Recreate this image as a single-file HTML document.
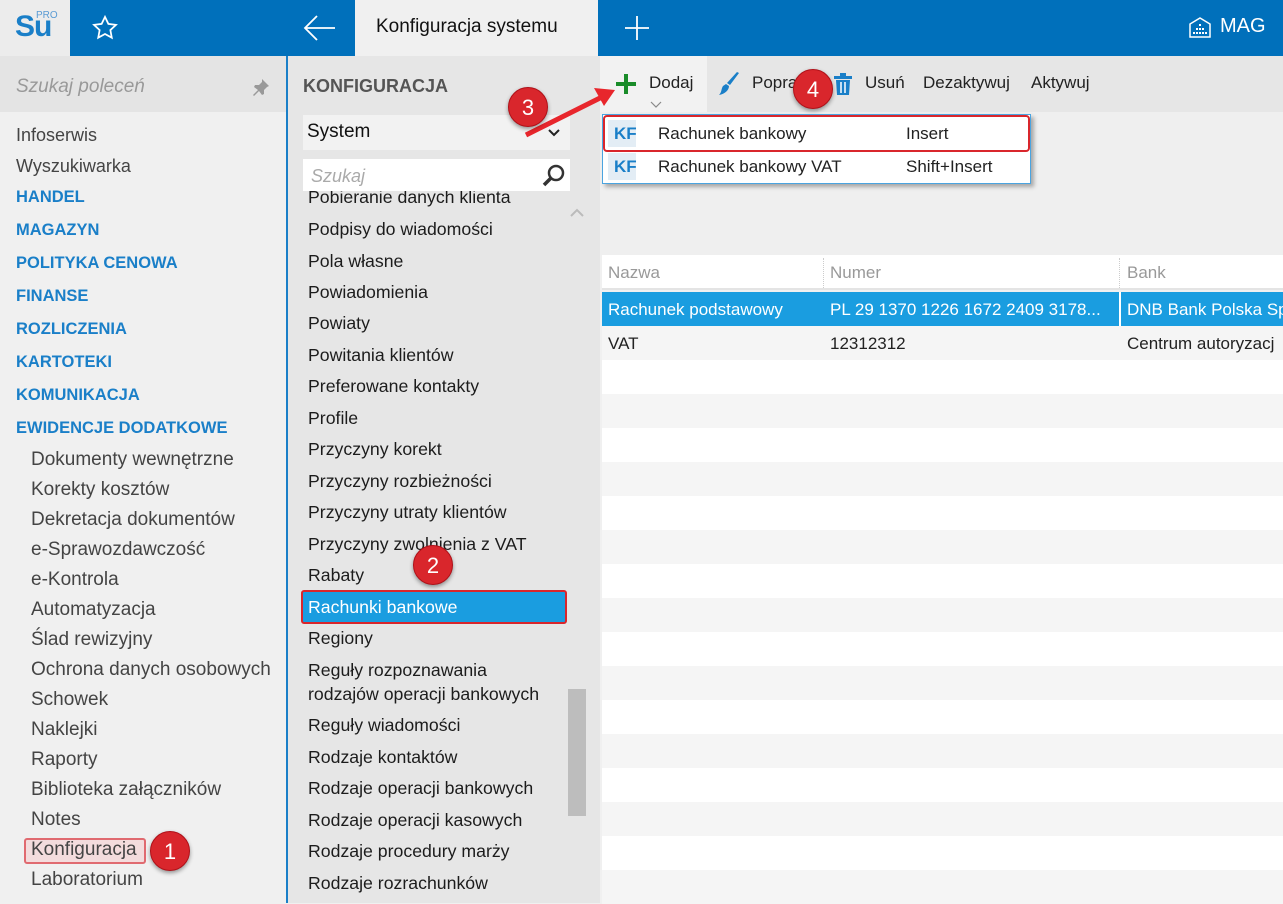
<!DOCTYPE html>
<html><head><meta charset="utf-8"><style>
*{margin:0;padding:0;box-sizing:border-box}
body{width:1283px;height:903px;overflow:hidden;position:relative;font-family:"Liberation Sans",sans-serif;font-size:17px;color:#222;background:#f0f0f0}
.a{position:absolute;white-space:nowrap}
.top{position:absolute;left:70px;top:0;width:1213px;height:56px;background:#0070bb}
.s{color:#444;font-size:19px}
.s1{color:#444;font-size:18px}
.b{color:#1a7fc8;font-weight:bold;font-size:16.5px}
.m{color:#1c1c1c;font-size:17.7px}
.badge{position:absolute;width:40px;height:40px;border-radius:50%;background:#d9262c;color:#fff;font-size:22px;text-align:center;line-height:40px;box-shadow:0 2px 4px rgba(0,0,0,.4);border:1px solid #b01018}
.row{position:absolute;left:602px;width:681px;height:34px}
</style></head><body>
<div class="a" style="left:0;top:0;width:70px;height:56px;background:#ececec"></div>
<div class="a" style="left:15px;top:10px;font-size:30px;font-weight:bold;color:#1a7fc8;letter-spacing:-1px">Su</div>
<div class="a" style="left:36px;top:10px;font-size:10px;color:#5a9bd4">PRO</div>
<div class="top"></div>
<svg class="a" style="left:91px;top:14px" width="28" height="28" viewBox="0 0 24 24"><path d="M12 2.5l2.9 6 6.5.8-4.8 4.5 1.2 6.5L12 17.1l-5.8 3.2 1.2-6.5L2.6 9.3l6.5-.8z" fill="none" stroke="#fff" stroke-width="1.5"/></svg>
<svg class="a" style="left:303px;top:14px" width="34" height="28" viewBox="0 0 34 28"><path d="M2 14h30M14 2L2 14l12 12" fill="none" stroke="#fff" stroke-width="1.8"/></svg>
<div class="a" style="left:355px;top:0;width:243px;height:56px;background:#f0f0f0"></div>
<div class="a" style="left:376px;top:16px;font-size:19px;color:#111">Konfiguracja systemu</div>
<svg class="a" style="left:623px;top:14px" width="28" height="28"><path d="M14 2v24M2 14h24" stroke="#fff" stroke-width="1.8"/></svg>
<svg class="a" style="left:1188px;top:16px" width="24" height="22" viewBox="0 0 24 22"><path d="M2 21V8l10-6 10 6v13z" fill="none" stroke="#fff" stroke-width="1.5"/><g fill="#fff"><rect x="11" y="8" width="2" height="2"/><rect x="8" y="12" width="2" height="2"/><rect x="11" y="12" width="2" height="2"/><rect x="14" y="12" width="2" height="2"/><rect x="5" y="16" width="2" height="2"/><rect x="8" y="16" width="2" height="2"/><rect x="11" y="16" width="2" height="2"/><rect x="14" y="16" width="2" height="2"/><rect x="17" y="16" width="2" height="2"/></g></svg>
<div class="a" style="left:1220px;top:15px;font-size:20px;color:#fff">MAG</div>

<div class="a" style="left:0;top:56px;width:286px;height:56px;background:#e4e4e4"></div>
<div class="a" style="left:16px;top:76px;font-size:19px;font-style:italic;color:#999">Szukaj poleceń</div>
<svg class="a" style="left:251px;top:77px" width="20" height="20" viewBox="0 0 20 20"><path d="M11 2l7 7-2 1-3 3 0 4-2 1-3-4-5 5-1-1 5-5-4-3 1-2h4l3-3z" fill="#999"/></svg>
<div class="a" style="left:286px;top:56px;width:2px;height:847px;background:#1a7fc8"></div>
<div class="a s1" style="left:16px;top:125px">Infoserwis</div>
<div class="a s1" style="left:16px;top:156px">Wyszukiwarka</div>
<div class="a b" style="left:16px;top:188px">HANDEL</div>
<div class="a b" style="left:16px;top:221px">MAGAZYN</div>
<div class="a b" style="left:16px;top:254px">POLITYKA CENOWA</div>
<div class="a b" style="left:16px;top:287px">FINANSE</div>
<div class="a b" style="left:16px;top:320px">ROZLICZENIA</div>
<div class="a b" style="left:16px;top:353px">KARTOTEKI</div>
<div class="a b" style="left:16px;top:386px">KOMUNIKACJA</div>
<div class="a b" style="left:16px;top:419px">EWIDENCJE DODATKOWE</div>
<div class="a s" style="left:31px;top:449px">Dokumenty wewnętrzne</div>
<div class="a s" style="left:31px;top:479px">Korekty kosztów</div>
<div class="a s" style="left:31px;top:509px">Dekretacja dokumentów</div>
<div class="a s" style="left:31px;top:539px">e-Sprawozdawczość</div>
<div class="a s" style="left:31px;top:569px">e-Kontrola</div>
<div class="a s" style="left:31px;top:599px">Automatyzacja</div>
<div class="a s" style="left:31px;top:629px">Ślad rewizyjny</div>
<div class="a s" style="left:31px;top:659px">Ochrona danych osobowych</div>
<div class="a s" style="left:31px;top:689px">Schowek</div>
<div class="a s" style="left:31px;top:719px">Naklejki</div>
<div class="a s" style="left:31px;top:749px">Raporty</div>
<div class="a s" style="left:31px;top:779px">Biblioteka załączników</div>
<div class="a s" style="left:31px;top:809px">Notes</div>
<div class="a" style="left:24px;top:838px;width:122px;height:26px;border:2px solid #e06a70;border-radius:3px;background:#f3dcdd"></div>
<div class="a s" style="left:31px;top:839px">Konfiguracja</div>
<div class="a s" style="left:31px;top:869px">Laboratorium</div>
<div class="badge" style="left:150px;top:831px">1</div>

<div class="a" style="left:288px;top:56px;width:312px;height:847px;background:#e6e6e6"></div>
<div class="a" style="left:303px;top:76px;font-size:18px;font-weight:bold;color:#555">KONFIGURACJA</div>
<div class="a" style="left:303px;top:115px;width:267px;height:35px;background:#f2f2f2"></div>
<div class="a" style="left:307px;top:121px;font-size:19px;color:#111">System</div>
<svg class="a" style="left:547px;top:128px" width="14" height="10"><path d="M2 2l5 5 5-5" fill="none" stroke="#222" stroke-width="2"/></svg>
<div class="a" style="left:303px;top:159px;width:267px;height:32px;background:#fff"></div>
<div class="a" style="left:311px;top:166px;font-size:18px;font-style:italic;color:#aaa">Szukaj</div>
<svg class="a" style="left:541px;top:163px" width="26" height="26" viewBox="0 0 26 26"><circle cx="15" cy="10" r="7" fill="none" stroke="#333" stroke-width="2.5"/><path d="M10 15l-7 7" stroke="#333" stroke-width="3.5"/></svg>
<div style="position:absolute;left:288px;top:191px;width:280px;height:712px;overflow:hidden">
<div class="a m" style="left:20px;top:-4px">Pobieranie danych klienta</div>
</div>
<div class="a m" style="left:308px;top:219px">Podpisy do wiadomości</div>
<div class="a m" style="left:308px;top:251px">Pola własne</div>
<div class="a m" style="left:308px;top:282px">Powiadomienia</div>
<div class="a m" style="left:308px;top:313px">Powiaty</div>
<div class="a m" style="left:308px;top:345px">Powitania klientów</div>
<div class="a m" style="left:308px;top:376px">Preferowane kontakty</div>
<div class="a m" style="left:308px;top:408px">Profile</div>
<div class="a m" style="left:308px;top:439px">Przyczyny korekt</div>
<div class="a m" style="left:308px;top:471px">Przyczyny rozbieżności</div>
<div class="a m" style="left:308px;top:502px">Przyczyny utraty klientów</div>
<div class="a m" style="left:308px;top:534px">Przyczyny zwolnienia z VAT</div>
<div class="a m" style="left:308px;top:565px">Rabaty</div>
<div class="a" style="left:301px;top:590px;width:266px;height:34px;background:#1a9de0;border:2px solid #d9262c;border-radius:3px"></div>
<div class="a m" style="left:308px;top:597px;color:#fff">Rachunki bankowe</div>
<div class="a m" style="left:308px;top:660px">Reguły rozpoznawania</div>
<div class="a m" style="left:308px;top:628px">Regiony</div>
<div class="a m" style="left:308px;top:684px">rodzajów operacji bankowych</div>
<div class="a m" style="left:308px;top:715px">Reguły wiadomości</div>
<div class="a m" style="left:308px;top:747px">Rodzaje kontaktów</div>
<div class="a m" style="left:308px;top:778px">Rodzaje operacji bankowych</div>
<div class="a m" style="left:308px;top:810px">Rodzaje operacji kasowych</div>
<div class="a m" style="left:308px;top:841px">Rodzaje procedury marży</div>
<div class="a m" style="left:308px;top:873px">Rodzaje rozrachunków</div>
<svg class="a" style="left:569px;top:208px" width="16" height="10"><path d="M2 8l6-6 6 6" fill="none" stroke="#bbb" stroke-width="2"/></svg>
<div class="a" style="left:568px;top:689px;width:18px;height:127px;background:#bdbdbd"></div>
<div class="badge" style="left:413px;top:545px">2</div>

<div class="a" style="left:600px;top:56px;width:683px;height:56px;background:#e6e6e6"></div>
<div class="a" style="left:600px;top:56px;width:107px;height:56px;background:#f2f2f2"></div>
<div class="a" style="left:600px;top:112px;width:683px;height:143px;background:#efefef"></div>
<svg class="a" style="left:615px;top:73px" width="22" height="22"><path d="M11 1v20M1 11h20" stroke="#1a8c2a" stroke-width="4"/></svg>
<div class="a" style="left:649px;top:73px">Dodaj</div>
<svg class="a" style="left:650px;top:101px" width="12" height="7"><path d="M1 1l5 5 5-5" fill="none" stroke="#888" stroke-width="1.2"/></svg>
<svg class="a" style="left:718px;top:72px" width="22" height="24" viewBox="0 0 22 24"><path d="M21 1L12 13l-3-2L19 0z" fill="#1a7fc8"/><path d="M8 12l3 2c0 4-4 8-10 9 3-3 2-6 4-9z" fill="#1a7fc8"/></svg>
<div class="a" style="left:752px;top:73px">Popraw</div>
<svg class="a" style="left:833px;top:73px" width="20" height="22"><rect x="1" y="3" width="18" height="3" fill="#1a7fc8"/><rect x="7" y="0" width="6" height="3" fill="#1a7fc8"/><path d="M3 7h14l-1 15H4z" fill="#1a7fc8"/><path d="M8 9v11M12 9v11" stroke="#fff" stroke-width="1.5"/></svg>
<div class="a" style="left:865px;top:73px">Usuń</div>
<div class="a" style="left:923px;top:73px">Dezaktywuj</div>
<div class="a" style="left:1031px;top:73px">Aktywuj</div>
<div class="badge" style="left:793px;top:69px">4</div>

<div class="a" style="left:602px;top:114px;width:429px;height:70px;background:#fff;border:1px solid #4aa4e0;box-shadow:3px 3px 4px rgba(0,0,0,.3)"></div>
<div class="a" style="left:608px;top:120px;width:28px;height:27px;background:#e3edf5"></div>
<div class="a" style="left:608px;top:153px;width:28px;height:27px;background:#e3edf5"></div>
<div class="a" style="left:614px;top:124px;font-weight:bold;color:#1a7fc8">KF</div>
<div class="a" style="left:614px;top:157px;font-weight:bold;color:#1a7fc8">KF</div>
<div class="a" style="left:658px;top:124px">Rachunek bankowy</div>
<div class="a" style="left:906px;top:124px">Insert</div>
<div class="a" style="left:658px;top:157px">Rachunek bankowy VAT</div>
<div class="a" style="left:906px;top:157px">Shift+Insert</div>
<div class="a" style="left:603px;top:115px;width:427px;height:37px;border:2px solid #d9262c;border-radius:4px"></div>

<div class="row" style="top:255px;height:35px;background:#fff;border-bottom:2px solid #e4e4e4"></div>
<div class="a" style="left:608px;top:263px;color:#999">Nazwa</div>
<div class="a" style="left:830px;top:263px;color:#999">Numer</div>
<div class="a" style="left:1127px;top:263px;color:#999">Bank</div>
<div class="a" style="left:823px;top:258px;height:30px;border-left:1px dotted #ccc"></div>
<div class="a" style="left:1119px;top:258px;height:30px;border-left:1px dotted #ccc"></div>
<div class="row" style="top:292px;background:#1a9de0"></div>
<div class="a" style="left:1119px;top:292px;width:2px;height:34px;background:#fff"></div>
<div class="a" style="left:608px;top:300px;color:#fff">Rachunek podstawowy</div>
<div class="a" style="left:830px;top:300px;color:#fff">PL 29 1370 1226 1672 2409 3178...</div>
<div class="a" style="left:1127px;top:300px;color:#fff">DNB Bank Polska Sp</div>
<div class="row" style="top:326px;background:#f5f5f5"></div>
<div class="a" style="left:608px;top:334px">VAT</div>
<div class="a" style="left:830px;top:334px">12312312</div>
<div class="a" style="left:1127px;top:334px">Centrum autoryzacj</div>
<div class="row" style="top:360px;background:#fff"></div>
<div class="row" style="top:394px;background:#f5f5f5"></div>
<div class="row" style="top:428px;background:#fff"></div>
<div class="row" style="top:462px;background:#f5f5f5"></div>
<div class="row" style="top:496px;background:#fff"></div>
<div class="row" style="top:530px;background:#f5f5f5"></div>
<div class="row" style="top:564px;background:#fff"></div>
<div class="row" style="top:598px;background:#f5f5f5"></div>
<div class="row" style="top:632px;background:#fff"></div>
<div class="row" style="top:666px;background:#f5f5f5"></div>
<div class="row" style="top:700px;background:#fff"></div>
<div class="row" style="top:734px;background:#f5f5f5"></div>
<div class="row" style="top:768px;background:#fff"></div>
<div class="row" style="top:802px;background:#f5f5f5"></div>
<div class="row" style="top:836px;background:#fff"></div>
<div class="row" style="top:870px;background:#f5f5f5"></div>

<svg class="a" style="left:520px;top:80px" width="100" height="60"><path d="M6 55L88 14" stroke="#e8262c" stroke-width="5"/><path d="M95 10L74 8 84 26z" fill="#e8262c"/></svg>
<div class="badge" style="left:508px;top:87px">3</div>
</body></html>
